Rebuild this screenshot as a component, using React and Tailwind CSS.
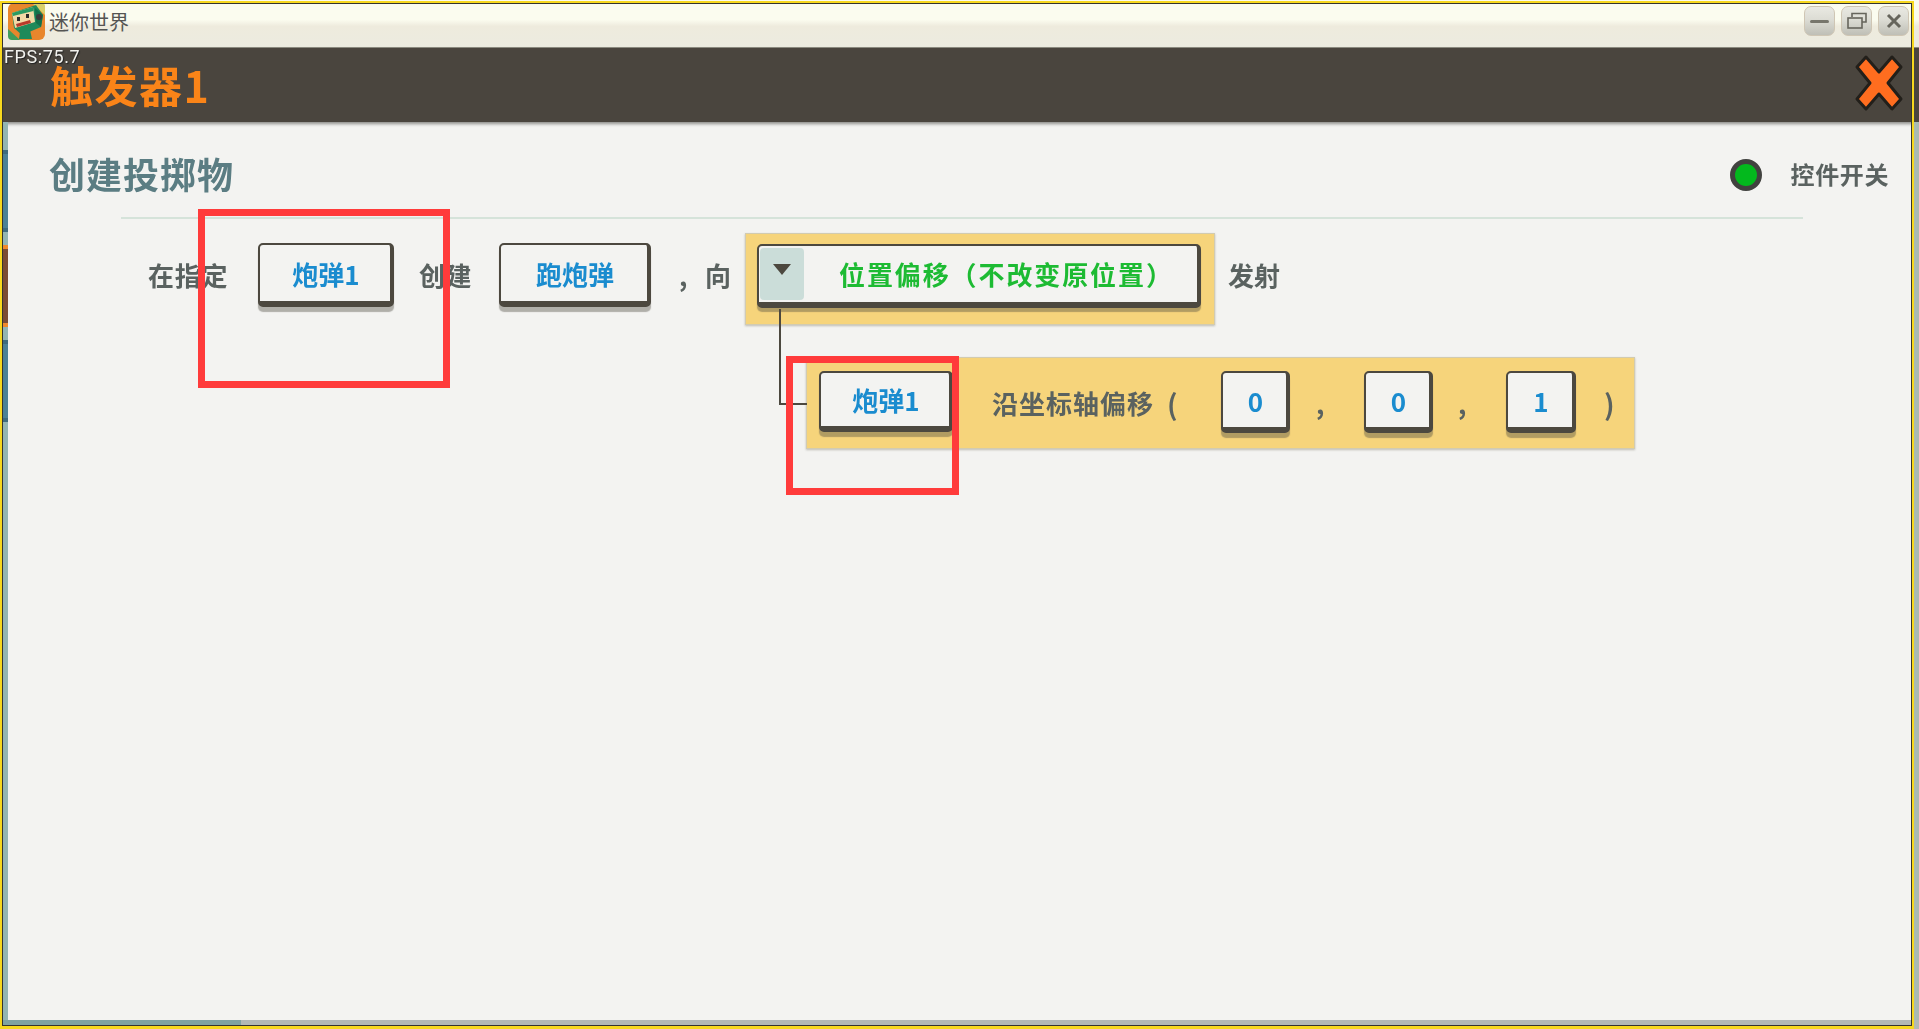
const font = { fontFamily: '"Noto Sans CJK SC", "Noto Sans", sans-serif' };

function Logo() {
  return (
    <svg width="37" height="37" viewBox="0 0 37 37" className="shrink-0">
      <rect x="0" y="0" width="37" height="37" rx="6" fill="#e8862c" />
      <path d="M0 26 L12 37 H4 Q0 37 0 33Z" fill="#3f9c5a" />
      <path d="M24 0 L37 12 V3 Q37 0 33 0Z" fill="#d9cf6a" />
      <path d="M4 10 L28 2 L35 12 L33 24 L14 32 L6 25Z" fill="#1f8a5a" />
      <path d="M4 10 L25 4 L27 19 L7 25Z" fill="#f2d9a6" />
      <path d="M4 10 L25 4 L25.5 8 L5 13Z" fill="#2a9a63" />
      <path d="M8 21 L22 17 L23 20 L9 24Z" fill="#b8392b" />
      <rect x="9" y="14" width="3" height="4" fill="#2b2b2b" />
      <rect x="18" y="11" width="3" height="4" fill="#2b2b2b" />
      <path d="M27 5 L35 12 L33 24 L28 20Z" fill="#14704a" />
      <circle cx="31" cy="14" r="3" fill="#3b3b3b" />
      <path d="M12 29 L22 27 L24 36 H11Z" fill="#1f8a5a" />
    </svg>
  );
}

function WinBtn({ children }) {
  return (
    <div className="flex h-[30px] w-[31px] items-center justify-center rounded-[7px] border border-[#cfc6b4] bg-[linear-gradient(180deg,#e9e9e2_0%,#dcdcd4_45%,#bfbfb6_100%)]">
      {children}
    </div>
  );
}

function Btn({ w, h = 'h-[64px]', children }) {
  return (
    <div
      className={`flex shrink-0 items-center justify-center rounded-[5px] border-2 border-r-[4px] border-b-[6px] border-[#4c483f] bg-[#f3f3f1] pl-[2px] text-[26px] font-bold text-[#1a8ccf] shadow-[0_5px_1px_rgba(76,72,63,0.4)] ${w} ${h}`}
    >
      {children}
    </div>
  );
}

function Label({ className = '', children }) {
  return (
    <div className={`flex h-[64px] shrink-0 items-center whitespace-nowrap text-[26px] font-bold leading-none text-[#5a6260] ${className}`}>
      {children}
    </div>
  );
}

export default function App() {
  return (
    <div className="relative flex h-[1029px] w-[1919px] flex-col overflow-hidden bg-[#f3f3f1]" style={font}>
      <div className="flex min-h-0 flex-1 flex-col blur-[0.5px]">
        {/* window title bar */}
        <div className="flex h-[48px] shrink-0 items-start justify-between border-b border-[#8e8d82] bg-[linear-gradient(180deg,#fbfcef_0%,#fbfcef_42%,#eeebdd_56%,#ecebe0_100%)] pl-[8px] pr-[10px] pt-[3px]">
          <div className="flex items-center gap-[4px]">
            <Logo />
            <span className="text-[20px] font-normal leading-none text-[#555553]">迷你世界</span>
          </div>
          <div className="mt-[3px] flex gap-[6px]">
            <WinBtn>
              <div className="h-[3px] w-[19px] rounded-sm bg-[#77766c]" />
            </WinBtn>
            <WinBtn>
              <svg width="20" height="18" viewBox="0 0 20 18" fill="none" stroke="#66655c" strokeWidth="1.6">
                <path d="M5 5 V1.5 H19 V10 H15" />
                <rect x="1" y="6" width="14" height="10" />
              </svg>
            </WinBtn>
            <WinBtn>
              <svg width="16" height="16" viewBox="0 0 16 16" stroke="#66655c" strokeWidth="3">
                <path d="M2 2 L14 14 M14 2 L2 14" />
              </svg>
            </WinBtn>
          </div>
        </div>

        {/* app header */}
        <div className="flex h-[74px] shrink-0 items-center justify-between bg-[#4a453e] pl-[50px] pr-[15px] shadow-[0_2px_3px_rgba(60,60,55,0.55)]">
          <span className="mt-[-2px] text-[43px] font-bold leading-none tracking-[1.5px] text-[#fa8418]">触发器1</span>
          <svg width="50" height="58" viewBox="0 0 50 58" className="mt-[-4px]">
            <path
              d="M12 3 L25 18 L38 3 L47 13 L34 29 L47 45 L38 55 L25 40 L12 55 L3 45 L16 29 L3 13Z"
              fill="#ff6d1f"
              stroke="#221f1a"
              strokeWidth="3"
              strokeLinejoin="round"
            />
          </svg>
        </div>

        {/* body */}
        <div className="flex min-h-0 flex-1">
          <div className="flex w-[8px] shrink-0 flex-col gap-[13px] bg-[#93b5b2] pl-[3px] pt-[28px]">
            <div className="h-[82px] border-y-[4px] border-[#3e6b7e] bg-[#4b8196]" />
            <div className="h-[82px] border-y-[4px] border-[#f08a2c] bg-[#7b4c33]" />
            <div className="h-[82px] border-y-[4px] border-[#3e6b7e] bg-[#4b8196]" />
          </div>

          <div className="flex min-w-0 flex-1 flex-col">
            <div className="flex h-[95px] shrink-0 items-center justify-between pb-[5px] pl-[41px] pr-[25px] pt-[11px]">
              <span className="text-[36px] font-bold leading-none tracking-[1px] text-[#5b7d83]">创建投掷物</span>
              <div className="flex items-center gap-[29px]">
                <div className="mt-[4px] h-[32px] w-[32px] rounded-full border-[5px] border-[#41423f] bg-[#03b91d]" />
                <span className="mt-[2px] text-[24px] font-bold leading-none tracking-[0.6px] text-[#5a6260]">控件开关</span>
              </div>
            </div>
            <div className="ml-[113px] h-[2px] w-[1682px] shrink-0 bg-[#d5e3da]" />

            {/* first row */}
            <div className="mt-[14px] flex items-start pl-[140px]">
              <Label className="mt-[10px] w-[80px] tracking-[0.8px]">在指定</Label>
              <div className="ml-[30px] mt-[10px]">
                <Btn w="w-[136px]">炮弹1</Btn>
              </div>
              <Label className="ml-[25px] mt-[10px] w-[53px] tracking-[0.5px]">创建</Label>
              <div className="ml-[27px] mt-[10px]">
                <Btn w="w-[152px]">跑炮弹</Btn>
              </div>
              <Label className="ml-[28px] mt-[10px] w-[26px]">,</Label>
              <Label className="mt-[10px] w-[23px]">向</Label>
              <div className="relative ml-[17px] h-[92px] w-[470px] shrink-0 border border-[#d2cbb0] bg-[#f6d47b] pl-[11px] pt-[10px] shadow-[0_1px_2px_rgba(90,85,70,0.35)]">
                <div className="flex h-[64px] w-[444px] items-stretch rounded-[5px] border-2 border-r-[4px] border-b-[6px] border-[#4c483f] bg-[#f3f3f1] shadow-[0_4px_1px_rgba(76,72,63,0.4)]">
                  <div className="my-[2px] ml-[1px] flex w-[44px] justify-center rounded-[4px] bg-[#cbddd9] pt-[16px]">
                    <svg width="18" height="11" viewBox="0 0 18 11">
                      <path d="M0 0 H18 L9 11Z" fill="#4c483f" />
                    </svg>
                  </div>
                  <span className="ml-[35px] self-center whitespace-nowrap text-[26px] font-bold leading-none tracking-[1.9px] text-[#1dbb33]">
                    位置偏移（不改变原位置）
                  </span>
                </div>
              </div>
              <Label className="ml-[13px] mt-[10px]">发射</Label>
            </div>

            {/* second row */}
            <div className="relative ml-[798px] mt-[32px] flex h-[92px] w-[829px] shrink-0 items-start border border-[#d2cbb0] bg-[#f6d47b] pl-[12px] pt-[13px] shadow-[0_1px_2px_rgba(90,85,70,0.35)]">
              <div className="absolute left-[-28px] top-[-49px] h-[96px] w-[28px] border-b-2 border-l-2 border-[#4c483f]" />
              <Btn w="w-[134px]" h="h-[61px]">炮弹1</Btn>
              <Label className="ml-[39px] h-[58px] w-[184px] gap-[13px] tracking-[1px]">
                <span>沿坐标轴偏移</span>
                <span className="text-[28px]">(</span>
              </Label>
              <div className="ml-[45px]">
                <Btn w="w-[69px]" h="h-[62px]">0</Btn>
              </div>
              <Label className="ml-[26px] h-[54px] w-[48px]">,</Label>
              <div>
                <Btn w="w-[69px]" h="h-[62px]">0</Btn>
              </div>
              <Label className="ml-[25px] h-[54px] w-[48px]">,</Label>
              <div>
                <Btn w="w-[70px]" h="h-[62px]">1</Btn>
              </div>
              <Label className="ml-[28px] h-[58px] text-[28px]">)</Label>
            </div>
          </div>

          <div className="w-[5px] shrink-0 bg-[#a9bab2]" />
        </div>

        {/* bottom scrollbar */}
        <div className="flex h-[5px] shrink-0 pl-[3px]">
          <div className="w-[238px] bg-[#7fa3a1]" />
          <div className="flex-1 bg-[#b3b9b4]" />
        </div>
        <div className="h-[4px] shrink-0 bg-[#b3b9b4]" />
      </div>

      {/* capture frame */}
      <div className="pointer-events-none absolute bottom-0 left-0 top-[1px] w-[1914px] border-2 border-b-[3px] border-[#f7d81e]">
        <div className="h-full w-full border border-[#34342f]" />
      </div>

      <div className="absolute left-[4px] top-[48px] text-[18px] font-normal leading-none tracking-[0.6px] text-[#f2f2ee] [text-shadow:1px_1px_1px_#222]" style={{ fontFamily: '"Roboto", sans-serif' }}>
        FPS:75.7
      </div>

      {/* red annotations */}
      <div className="pointer-events-none absolute left-[198px] top-[209px] h-[179px] w-[252px] border-[7px] border-[#ff3b3b]" />
      <div className="pointer-events-none absolute left-[786px] top-[356px] h-[139px] w-[173px] border-[7px] border-[#ff3b3b]" />
    </div>
  );
}
